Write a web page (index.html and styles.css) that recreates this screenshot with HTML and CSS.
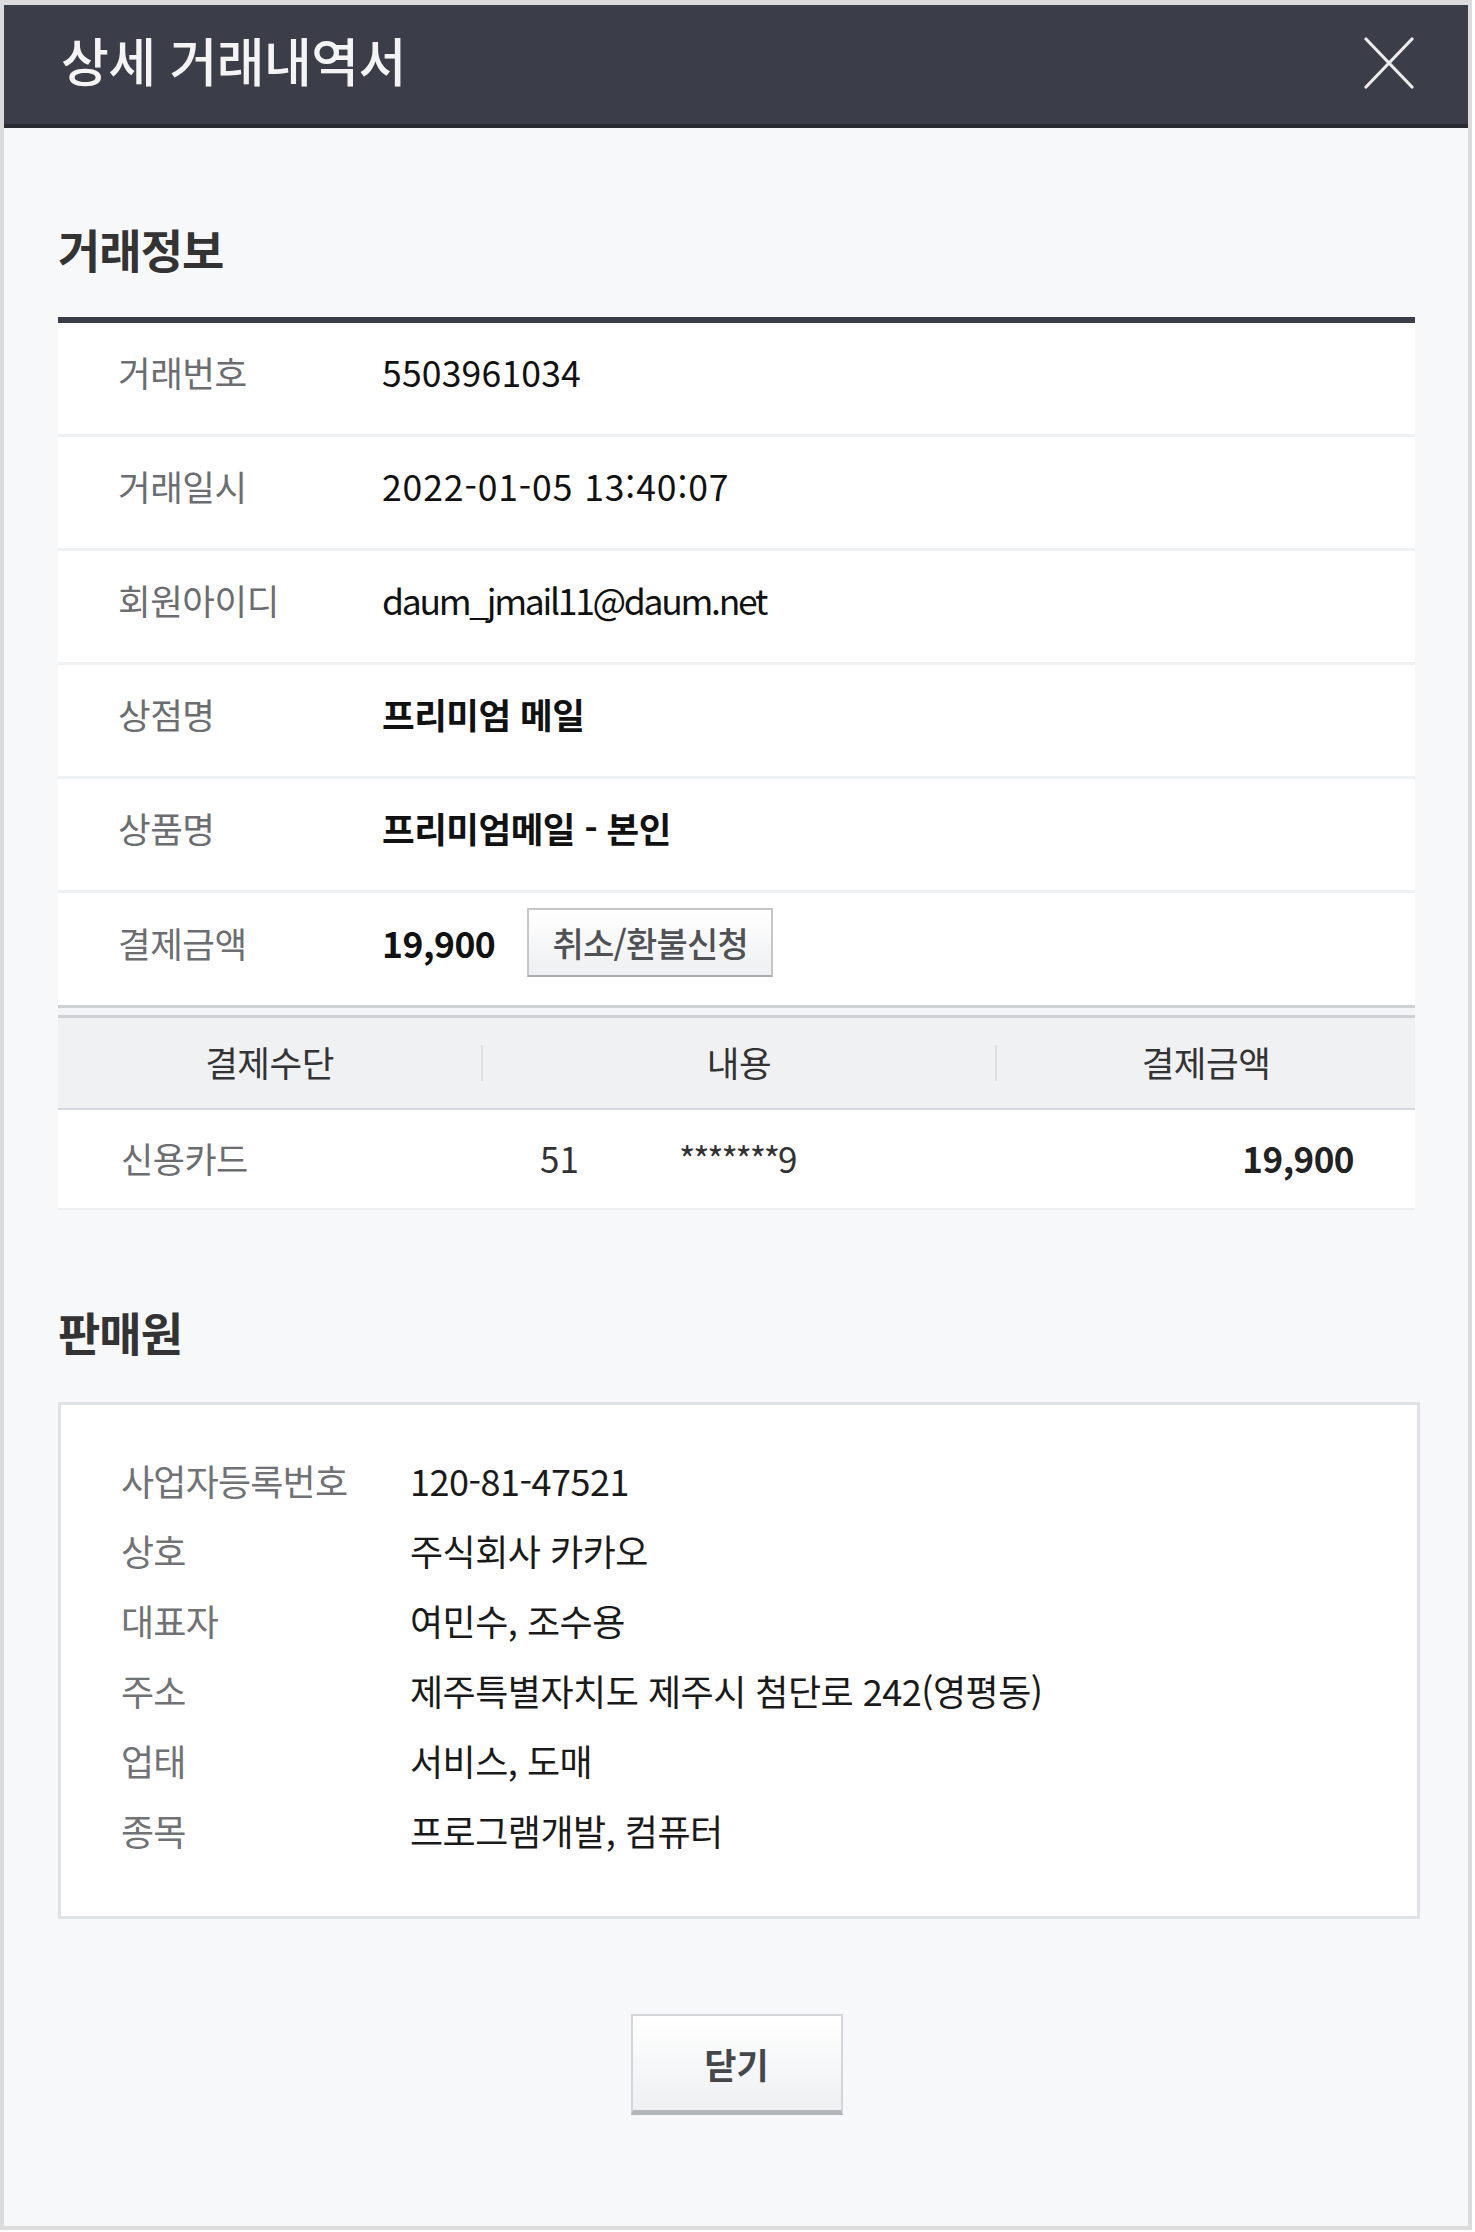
FILE: index.html
```html
<!DOCTYPE html>
<html lang="ko">
<head>
<meta charset="utf-8">
<title>상세 거래내역서</title>
<link rel="stylesheet" href="styles.css">
</head>
<body>
<div class="frame">
  <div class="topbar">
    <h1 class="title">상세 거래내역서</h1>
    <svg class="close-x" width="50" height="52" viewBox="0 0 50 52" aria-hidden="true">
      <line x1="2" y1="2" x2="48" y2="50" stroke="#ececec" stroke-width="3.2" stroke-linecap="round"/>
      <line x1="48" y1="2" x2="2" y2="50" stroke="#ececec" stroke-width="3.2" stroke-linecap="round"/>
    </svg>
  </div>
  <div class="content">
    <h2 class="sec-title first">거래정보</h2>
    <div class="info">
      <div class="row"><span class="lbl">거래번호</span><span class="val num-val">5503961034</span></div>
      <div class="row"><span class="lbl">거래일시</span><span class="val date-val">2022-01-05 13:40:07</span></div>
      <div class="row"><span class="lbl">회원아이디</span><span class="val email">daum_jmail11@daum.net</span></div>
      <div class="row"><span class="lbl">상점명</span><span class="val strong">프리미엄 메일</span></div>
      <div class="row"><span class="lbl">상품명</span><span class="val strong">프리미엄메일 - 본인</span></div>
      <div class="row last"><span class="lbl">결제금액</span><span class="val strong amount">19,900</span><span class="refund">취소/환불신청</span></div>
    </div>
    <div class="dbl"></div>
    <div class="pay">
      <div class="pay-head">
        <div class="pc c1">결제수단</div>
        <div class="pc c2">내용</div>
        <div class="pc c3">결제금액</div>
      </div>
      <div class="pay-row">
        <div class="pd c1">신용카드</div>
        <div class="pd c2"><span class="num">51</span><span class="mask">*******9</span></div>
        <div class="pd c3">19,900</div>
      </div>
    </div>
    <h2 class="sec-title second">판매원</h2>
    <div class="seller">
      <div class="srow"><span class="slbl">사업자등록번호</span><span class="sval">120-81-47521</span></div>
      <div class="srow"><span class="slbl">상호</span><span class="sval">주식회사 카카오</span></div>
      <div class="srow"><span class="slbl">대표자</span><span class="sval">여민수, 조수용</span></div>
      <div class="srow"><span class="slbl">주소</span><span class="sval">제주특별자치도 제주시 첨단로 242(영평동)</span></div>
      <div class="srow"><span class="slbl">업태</span><span class="sval">서비스, 도매</span></div>
      <div class="srow"><span class="slbl">종목</span><span class="sval">프로그램개발, 컴퓨터</span></div>
    </div>
    <div class="actions"><span class="close-btn">닫기</span></div>
  </div>
</div>
</body>
</html>
```

FILE: styles.css
```css
* { box-sizing: border-box; }
html, body { margin: 0; padding: 0; background: #ffffff; }
body {
  font-family: "Noto Sans CJK KR", "Noto Sans", sans-serif;
  color: #111;
}
.frame {
  width: 1472px;
  border: 4px solid #dcdcdc;
  border-top-width: 5px;
  background: #f7f8fa;
}
.topbar {
  height: 123px;
  background: #3b3e48;
  border-bottom: 4px solid #2a2c33;
  display: flex;
  align-items: center;
  justify-content: space-between;
  padding: 0 54px 10px 57px;
}
.title {
  margin: 0;
  font-size: 52px;
  font-weight: 500;
  color: #f4f4f4;
  letter-spacing: -0.6px;
  line-height: 1;
}
.close-x { display: block; margin-top: 6px; }
.content {
  padding: 0 53px 111px 54px;
}
.sec-title {
  margin: 0;
  font-size: 46px;
  font-weight: 700;
  color: #333;
  line-height: 50px;
  letter-spacing: -1px;
}
.sec-title.first { margin-top: 95px; margin-bottom: 44px; }
.sec-title.second { margin-top: 96px; margin-bottom: 46px; }
.info {
  background: #fff;
  border-top: 6px solid #3b3e48;
}
.row {
  height: 114px;
  border-bottom: 3px solid #f0f1f3;
  display: flex;
  align-items: center;
  padding-left: 60px;
  padding-bottom: 14px;
  font-size: 35.5px;
}
.row.last { height: 112px; border-bottom: none; }
.lbl {
  width: 264px;
  color: #6b6d70;
  font-size: 35.5px;
  flex: none;
  letter-spacing: -0.5px;
}
.val { color: #111; letter-spacing: -0.3px; }
.val.num-val { letter-spacing: 0.2px; }
.val.date-val { letter-spacing: 0.9px; }
.val.email { letter-spacing: -2.3px; }
.val.strong { font-weight: 700; letter-spacing: -0.5px; }
.amount { margin-right: 32px; }
.refund {
  display: inline-flex;
  align-items: center;
  justify-content: center;
  width: 246px;
  height: 69px;
  border: 2px solid #c4c6c9;
  border-bottom-color: #a9abaf;
  background: linear-gradient(#ffffff, #eeeff1);
  color: #4f5154;
  font-size: 34px;
  font-weight: 500;
  letter-spacing: -0.8px;
}
.dbl {
  height: 13px;
  border-top: 3px solid #cdd0d4;
  border-bottom: 3px solid #cdd0d4;
  background: #f3f4f6;
}
.pay { background: #fff; }
.pay-head {
  display: flex;
  height: 92px;
  background: #f0f1f3;
  border-bottom: 2px solid #d5d8dc;
  align-items: center;
}
.pc {
  text-align: center;
  font-size: 35.5px;
  color: #333;
  line-height: 33px;
  padding-bottom: 3px;
  letter-spacing: -0.5px;
}
.c1 { width: 423px; flex: none; }
.c2 { width: 514px; flex: none; }
.c3 { flex: 1; }
.pc.c2, .pc.c3 { border-left: 2px solid #dde0e4; }
.pay-row {
  display: flex;
  height: 100px;
  align-items: center;
  border-bottom: 2px solid #eceef0;
  padding-bottom: 3px;
}
.pd { font-size: 35px; color: #333; }
.pd.c1 { padding-left: 63px; color: #6b6d70; letter-spacing: -0.5px; }
.pd.c2 { padding-left: 59px; display: flex; }
.num { width: 139px; }
.mask { letter-spacing: -2.2px; }
.pd.c3 { text-align: right; padding-right: 61px; font-weight: 700; color: #222; letter-spacing: -0.5px; }
.seller {
  background: #fff;
  border: 3px solid #dfe3e8;
  margin-right: -5px;
  padding: 40px 0 51px 60px;
}
.srow {
  display: flex;
  height: 70px;
  align-items: center;
  font-size: 36px;
}
.slbl { width: 289px; flex: none; color: #707275; letter-spacing: -0.8px; }
.sval { color: #1a1a1a; letter-spacing: -0.5px; }
.actions {
  display: flex;
  justify-content: center;
  margin-top: 95px;
}
.close-btn {
  display: inline-flex;
  align-items: center;
  justify-content: center;
  width: 212px;
  height: 101px;
  border: 2px solid #d3d5d8;
  border-bottom: 5px solid #b2b5ba;
  background: linear-gradient(#ffffff, #eef0f2);
  color: #45474b;
  font-size: 35px;
  font-weight: 700;
}
```
